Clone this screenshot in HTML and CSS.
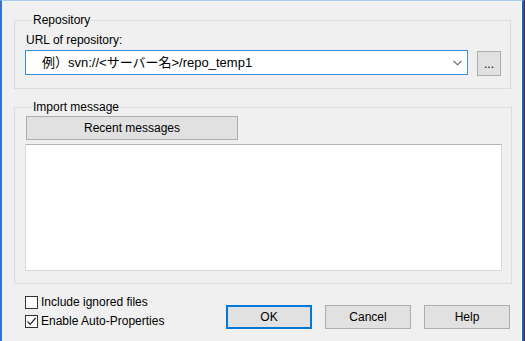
FILE: index.html
```html
<!DOCTYPE html>
<html lang="ja">
<head>
    <meta charset="UTF-8">
    <title>Import</title>
    <link rel="stylesheet" href="styles.css">
</head>
<body>

<div class="window">

    <fieldset class="group repo-group">
        <legend>Repository</legend>
        <div class="field-label">URL of repository:</div>
        <div class="url-row">
            <div class="combo">
                <span class="combo-text">　例）svn://&lt;サーバー名&gt;/repo_temp1</span>
                <svg class="chevron" width="9" height="6" viewBox="0 0 9 6">
                    <path d="M0.5 0.8 L4.5 4.8 L8.5 0.8" fill="none" stroke="#606060" stroke-width="1.1"/>
                </svg>
            </div>
            <button class="btn browse-btn">...</button>
        </div>
    </fieldset>

    <fieldset class="group message-group">
        <legend>Import message</legend>
        <button class="btn recent-btn">Recent messages</button>
        <div class="message-box"></div>
    </fieldset>

    <div class="bottom-row">
        <div class="options">
            <label class="check">
                <span class="box"></span>
                Include ignored files
            </label>
            <label class="check">
                <span class="box">
                    <svg width="11" height="11" viewBox="0 0 11 11">
                        <path d="M1.5 5.5 L4.2 8.3 L9.6 2" fill="none" stroke="#222" stroke-width="1.2"/>
                    </svg>
                </span>
                Enable Auto-Properties
            </label>
        </div>
        <div class="actions">
            <button class="btn action-btn default-btn">OK</button>
            <button class="btn action-btn">Cancel</button>
            <button class="btn action-btn">Help</button>
        </div>
    </div>

</div>

</body>
</html>
```

FILE: styles.css
```css
body {
    margin: 0;
    font-family: 'Liberation Sans', 'Noto Sans CJK JP', sans-serif;
    font-size: 12px;
    color: #000;
    background: #3a3a3a;
}

.window {
    box-sizing: border-box;
    width: 524px;
    height: 341px;
    background: #f0f0f0;
    border-left: 2px solid #2f74c9;
    border-top: 1px solid #a9cbee;
    border-right: 2px solid #1f5fb5;
    box-shadow: inset -1px 0 #fbfbfb;
    padding: 12px 12px 0 12px;
}

.group {
    margin: 0;
    border: 1px solid #dcdcdc;
    padding: 0 9px 12px 10px;
}

.group legend {
    padding: 0 1px;
    margin-left: 7px;
    line-height: 14px;
}

.field-label {
    line-height: 14px;
    margin-top: 6px;
    margin-bottom: 3px;
    padding-left: 1px;
}

.url-row {
    display: flex;
    align-items: flex-start;
    gap: 9px;
}

.combo {
    box-sizing: border-box;
    width: 443px;
    height: 25px;
    background: #fff;
    border: 1px solid #3b8de0;
    display: flex;
    align-items: center;
    justify-content: space-between;
    padding: 0 5px 0 3px;
}

.combo-text {
    font-size: 13px;
    line-height: 15px;
    white-space: nowrap;
}

.btn {
    box-sizing: border-box;
    font-family: inherit;
    font-size: 12px;
    color: #000;
    background: #e1e1e1;
    border: 1px solid #adadad;
    padding: 0;
    margin: 0;
}

.browse-btn {
    width: 24px;
    height: 25px;
    margin-top: 1px;
    line-height: 18px;
}

.message-group {
    margin-top: 11px;
    padding-top: 2px;
}

.recent-btn {
    display: block;
    width: 212px;
    height: 24px;
    margin-left: 1px;
}

.message-box {
    box-sizing: border-box;
    width: 477px;
    height: 127px;
    margin-top: 4px;
    background: #fff;
    border: 1px solid #d9d9d9;
    border-top-color: #b4b4b4;
}

.bottom-row {
    display: flex;
    justify-content: space-between;
    padding: 11px 0 0 11px;
}

.options {
    display: flex;
    flex-direction: column;
    gap: 5px;
}

.check {
    display: flex;
    align-items: center;
    gap: 3px;
    line-height: 14px;
}

.box {
    box-sizing: border-box;
    width: 13px;
    height: 13px;
    background: #fff;
    border: 1px solid #333;
    display: flex;
    align-items: center;
    justify-content: center;
}

.actions {
    display: flex;
    gap: 13px;
    padding-top: 10px;
}

.action-btn {
    width: 86px;
    height: 24px;
}

.default-btn {
    border: 2px solid #0078d7;
}
```
